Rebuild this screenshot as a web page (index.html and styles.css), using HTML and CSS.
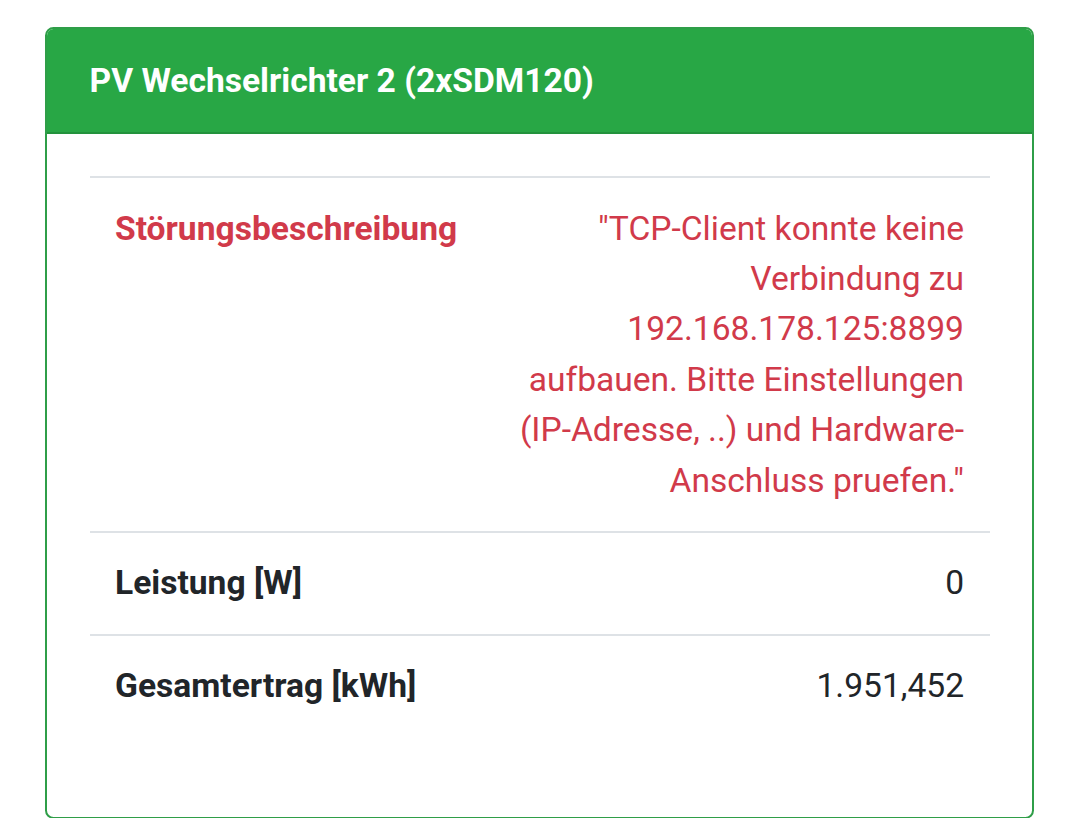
FILE: index.html
```html
<!DOCTYPE html>
<html lang="de">
<head>
<meta charset="utf-8">
<title>PV Wechselrichter 2</title>
<link rel="stylesheet" href="styles.css">
</head>
<body>
<div class="page">
  <div class="card">
    <div class="card-header">PV Wechselrichter 2 (2xSDM120)</div>
    <div class="card-body">
      <div class="table">
        <div class="row danger">
          <div class="label">Störungsbeschreibung</div>
          <div class="value">"TCP-Client konnte keine Verbindung zu 192.168.178.125:8899 aufbauen. Bitte Einstellungen (IP-Adresse, ..) und Hardware-Anschluss pruefen."</div>
        </div>
        <div class="row">
          <div class="label">Leistung [W]</div>
          <div class="value">0</div>
        </div>
        <div class="row">
          <div class="label">Gesamtertrag [kWh]</div>
          <div class="value">1.951,452</div>
        </div>
      </div>
    </div>
  </div>
</div>
</body>
</html>
```

FILE: styles.css
```css
html, body {
  margin: 0;
  padding: 0;
  background: #ffffff;
}

body {
  font-family: Roboto, "Liberation Sans", Arial, sans-serif;
  color: #212529;
  font-size: 33.6px;
  line-height: 50.4px;
}

.page {
  padding: 27px 46px 0 45px;
}

.card {
  border: 2px solid #2f9e48;
  border-radius: 8.5px;
  overflow: hidden;
  background: #ffffff;
}

.card-header {
  background: #28a745;
  color: #ffffff;
  font-weight: 700;
  padding: 26.6px 42.5px 26.4px 42.5px;
  border-bottom: 2px solid #23923c;
}

.card-body {
  padding: 42px 42.5px 47px 42.5px;
}

.table {
  display: flex;
  flex-direction: column;
  margin-bottom: 33.6px;
}

.row {
  display: grid;
  grid-template-columns: 1fr 505px;
  border-top: 2px solid #dee2e6;
}

.label,
.value {
  padding: 25.2px 25.5px;
}

.label {
  font-weight: 700;
}

.value {
  text-align: right;
}

.danger {
  color: #d13a4a;
}
```
